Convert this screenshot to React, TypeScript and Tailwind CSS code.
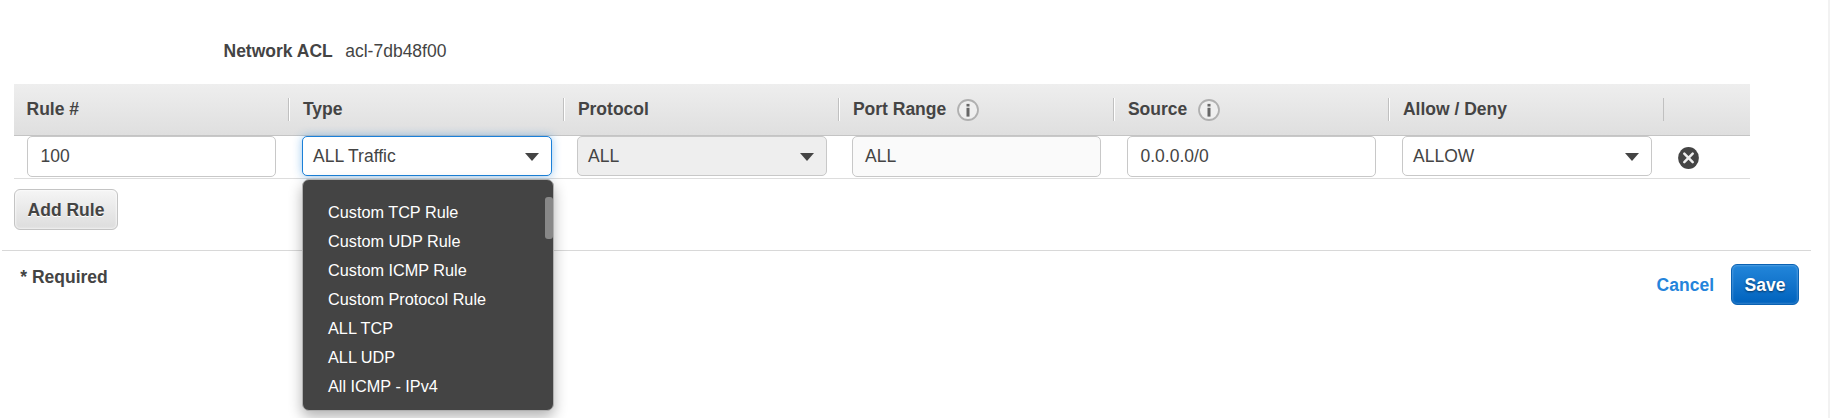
import React from "react";

const menuItems = [
  "Custom TCP Rule",
  "Custom UDP Rule",
  "Custom ICMP Rule",
  "Custom Protocol Rule",
  "ALL TCP",
  "ALL UDP",
  "All ICMP - IPv4",
];

const columns = [
  { label: "Rule #" },
  { label: "Type" },
  { label: "Protocol" },
  { label: "Port Range", info: true },
  { label: "Source", info: true },
  { label: "Allow / Deny" },
];

function InfoIcon() {
  return (
    <svg width="22" height="22" viewBox="0 0 22 22" className="mt-px ml-[11px]">
      <circle cx="11" cy="11" r="10" fill="#efefef" stroke="#b0b0b0" strokeWidth="1.8" />
      <rect x="9.5" y="4.9" width="3" height="2.6" fill="#666" />
      <rect x="9.5" y="8.8" width="3" height="8.8" fill="#666" />
    </svg>
  );
}

function TextField({ value, muted }: { value: string; muted?: boolean }) {
  return (
    <div
      className={`flex h-[41px] w-[249px] items-center rounded-[5px] border border-[#c8c8c8] pb-[2px] ${
        muted ? "bg-[#fafafa] pl-3" : "bg-white pl-[12.5px]"
      }`}
    >
      {value}
    </div>
  );
}

function SelectField({
  value,
  disabled,
  active,
  children,
}: {
  value: string;
  disabled?: boolean;
  active?: boolean;
  children?: React.ReactNode;
}) {
  const tone = active
    ? "border-[#1b80d8] bg-white shadow-[0_0_10px_rgba(34,132,219,0.45)]"
    : disabled
      ? "border-[#c8c8c8] bg-[#eee]"
      : "border-[#c8c8c8] bg-white";
  return (
    <div
      className={`relative flex h-10 w-[250px] items-center justify-between rounded-[5px] border pr-3 pb-px pl-[10px] ${tone}`}
    >
      <span>{value}</span>
      <svg width="14" height="8" viewBox="0 0 14 8" className="mt-[2px]">
        <path d="M0 0H14L7 8Z" fill="#444" />
      </svg>
      {children}
    </div>
  );
}

function TypeMenu() {
  return (
    <div className="absolute top-[42px] -left-px h-[232px] w-[252px] rounded-[7px] border border-[#b0b0b0] bg-[#444] pt-[18px] pl-[25px] text-[16.25px] text-white shadow-[0_6px_14px_rgba(0,0,0,0.3)]">
      {menuItems.map((item) => (
        <div key={item} className="h-[29px] leading-[29px]">
          {item}
        </div>
      ))}
      <div className="absolute top-[17px] right-0 h-[42px] w-2 rounded-[3px] bg-[#888]" />
    </div>
  );
}

export default function App() {
  return (
    <div className="flex h-[418px] w-[1830px] overflow-hidden bg-white font-['Liberation_Sans',Arial,sans-serif] text-[17.5px] leading-[24px] text-[#444]">
      <div className="w-[1828px] shrink-0">
        <div className="flex h-[84px] gap-[12.5px] pt-[39px] pl-[223.5px]">
          <b>Network ACL</b>
          <span>acl-7db48f00</span>
        </div>

        <div className="ml-[14px] w-[1736px]">
          <div className="flex h-[52px] border-b border-[#c4c4c4] bg-linear-to-b from-[#eee] to-[#dfdfdf] pt-[14px]">
            {columns.map((c) => (
              <div key={c.label} className="flex h-[23px] w-[275px] border-r border-[#c0c0c0]">
                <div
                  className={`flex h-[23px] w-[274px] items-start font-bold leading-[22px] ${
                    c.label === "Rule #" ? "pl-[12.5px]" : "border-l border-white pl-[12.9px]"
                  }`}
                >
                  {c.label}
                  {c.info && <InfoIcon />}
                </div>
              </div>
            ))}
          </div>
          <div className="flex h-[43px] border-b border-[#ddd]">
            <div className="w-[275px] pl-[13px]"><TextField value="100" /></div>
            <div className="w-[275px] pl-[13px]">
              <SelectField value="ALL Traffic" active>
                <TypeMenu />
              </SelectField>
            </div>
            <div className="w-[275px] pl-[13px]"><SelectField value="ALL" disabled /></div>
            <div className="w-[275px] pl-[13px]"><TextField value="ALL" muted /></div>
            <div className="w-[275px] pl-[13px]"><TextField value="0.0.0.0/0" /></div>
            <div className="w-[275px] pl-[13px]"><SelectField value="ALLOW" /></div>
            <div className="pt-[11px] pl-[14px]">
              <svg width="21" height="22" viewBox="0 0 21 22">
                <ellipse cx="10.5" cy="11" rx="10.4" ry="10.9" fill="#444" />
                <path d="M6.3 6.6L14.7 15.2M14.7 6.6L6.3 15.2" stroke="#eee" strokeWidth="2.5" strokeLinecap="round" />
              </svg>
            </div>
          </div>
        </div>

        <div className="h-[71px] pt-[10px] pl-[14px]">
          <button className="h-[41px] w-[104px] rounded-[6px] border border-[#c4c4c4] bg-linear-to-b from-[#f5f5f5] to-[#ddd] pt-px font-bold shadow-[inset_0_0_2px_1px_rgba(255,255,255,0.6)] [text-shadow:0_1px_0_#fff]">
            Add Rule
          </button>
        </div>

        <div className="ml-[2px] flex w-[1809px] justify-between border-t border-[#d8d8d8] pr-3 pl-[18.25px]">
          <b className="pt-[14px]">* Required</b>
          <div className="flex items-start gap-[17px] pt-[13px] font-bold">
            <a className="pt-[9px] text-[#2484db]">Cancel</a>
            <button className="h-[41px] w-[68px] rounded-[6px] border border-[#0a62b3] bg-linear-to-b from-[#2286da] to-[#0062bd] pt-px font-bold text-white shadow-[inset_0_0_2px_1px_rgba(255,255,255,0.2)] [text-shadow:0_1px_2px_rgba(0,0,0,0.5)]">
              Save
            </button>
          </div>
        </div>
      </div>
      <div className="w-[2px] bg-[#f2f2f2]" />
    </div>
  );
}
